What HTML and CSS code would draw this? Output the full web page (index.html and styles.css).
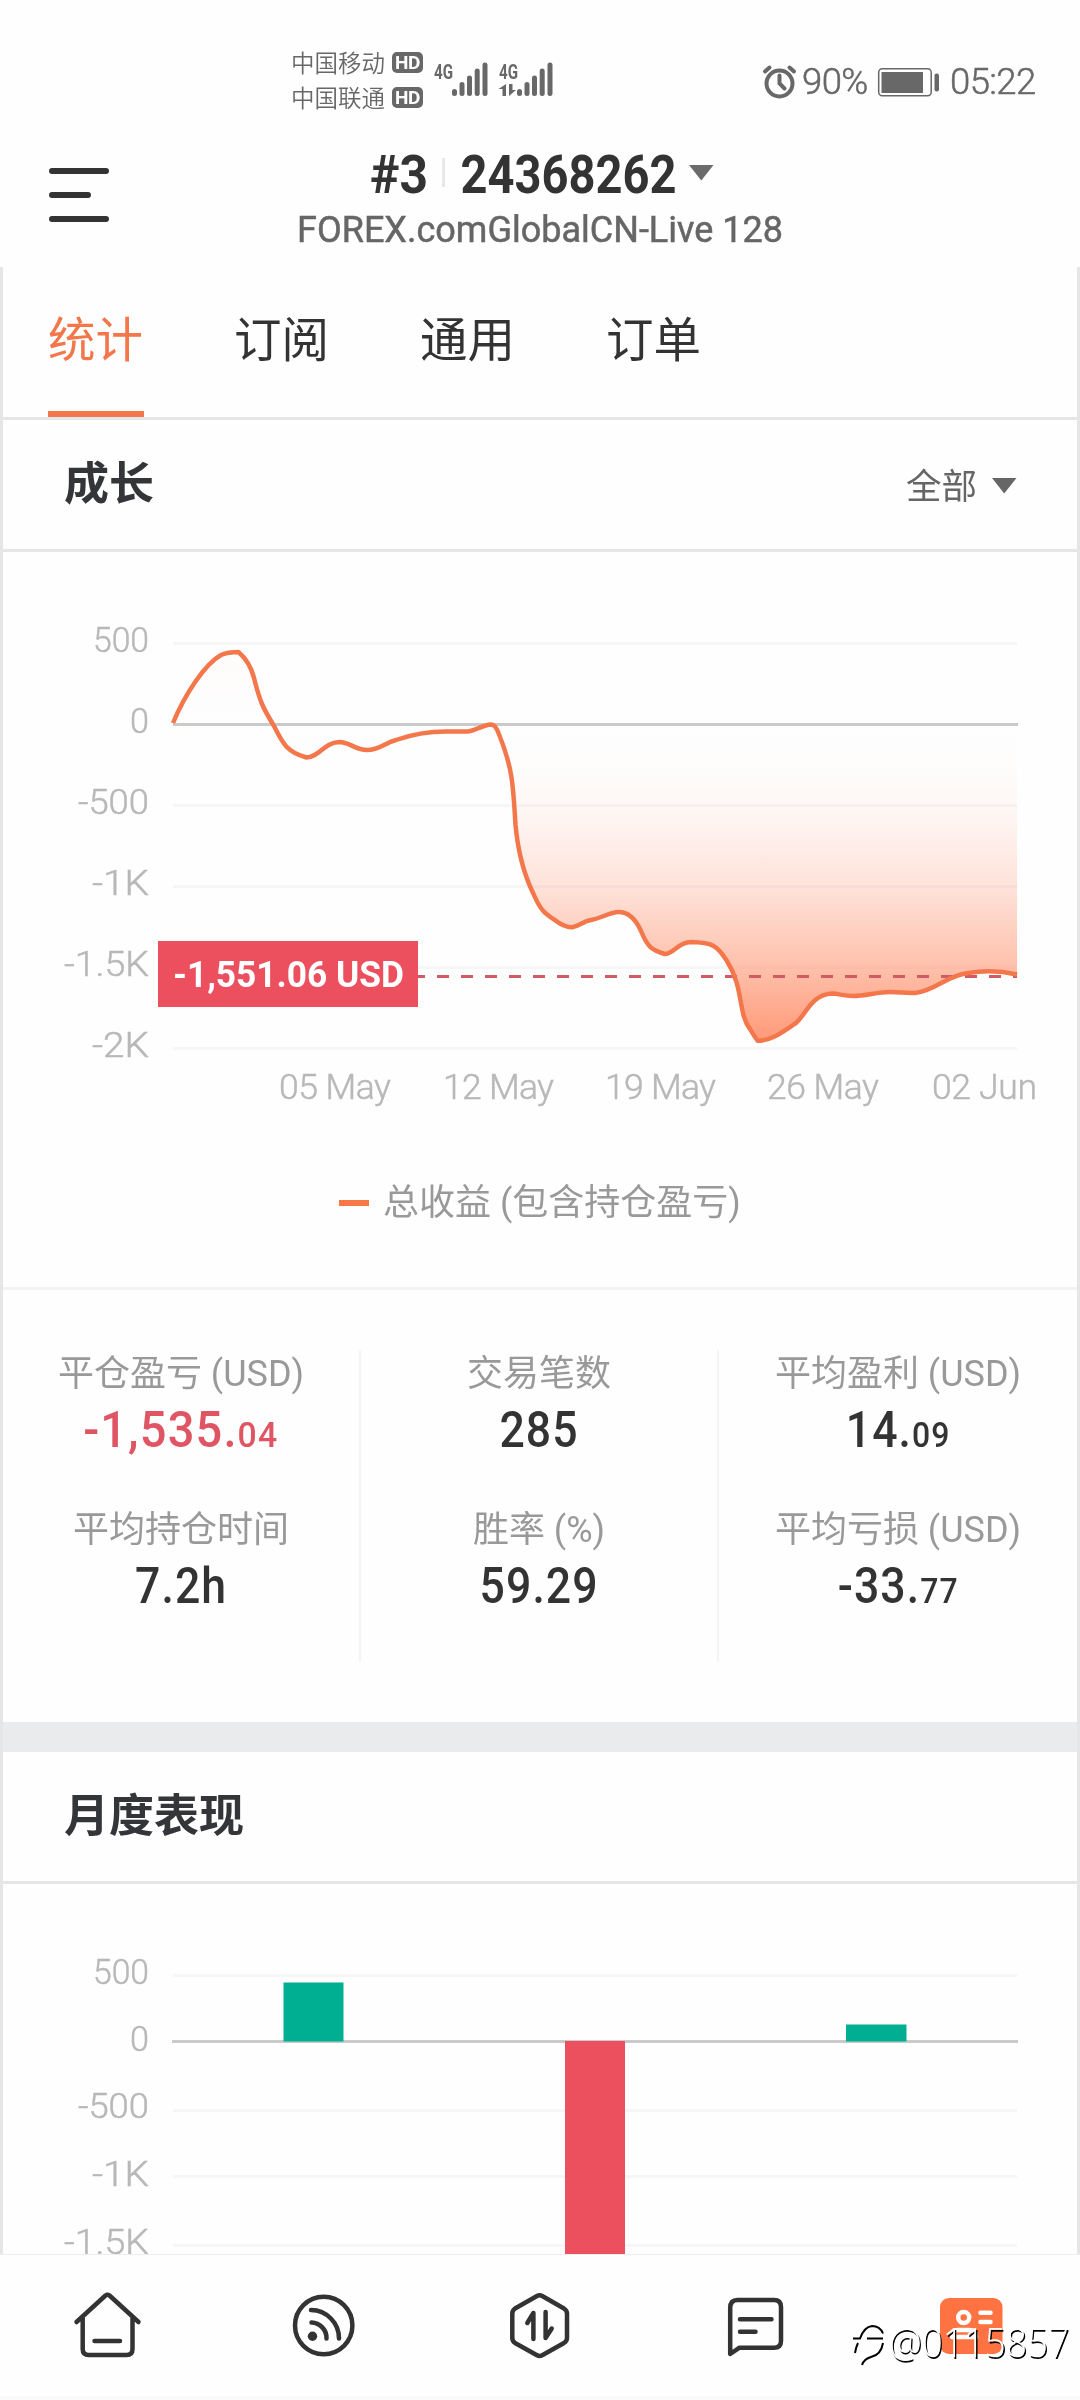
FILE: index.html
```html
<!DOCTYPE html>
<html lang="zh-CN">
<head>
<meta charset="utf-8">
<title>统计</title>
<link rel="stylesheet" href="styles.css">
</head>
<body>
<div class="screen">
  <div class="statusbar">
    <div class="carriers">
      <div class="carrier">中国移动<span class="hd">HD</span></div>
      <div class="carrier">中国联通<span class="hd">HD</span></div>
    </div>
    <svg class="signals" width="124" height="40" viewBox="432 60 124 40">
      <g class="net"><text x="434" y="79" textLength="19" lengthAdjust="spacingAndGlyphs">4G</text><text x="499" y="79" textLength="19" lengthAdjust="spacingAndGlyphs">4G</text></g>
      <g class="sig-bars">
        <path d="M454.5 91.5V93.5M462 84.500V93.500M469.500 78V93.500M477.200 71V93.500M485 65V93.500"/>
        <path d="M519.500 91.500V93.500M527 84.500V93.500M534.500 78V93.500M542.200 71V93.500M550 65V93.500"/>
      </g>
      <path class="solid" d="M506 84v12h-3.500v-7h-4zM509 96v-12h3.500v6h3.500z"/>
    </svg>
    <div class="power">
      <svg width="36" height="36" viewBox="762 62 36 36" class="alarm"><circle cx="779.500" cy="81.500" r="13"/><path d="M779.500 73.500v8l5 5M765 69.500l4.500-4M794 69.500l-4.500-4"/></svg>
      <span class="status-num">90%</span>
      <svg width="63" height="30" viewBox="877 65 63 30"><rect x="878.700" y="66.700" width="52.500" height="27" rx="3.500" fill="none" stroke="#686868" stroke-width="1.500"/><rect class="solid" x="881.500" y="70" width="41.500" height="21"/><rect class="solid" x="934.500" y="71.500" width="4.500" height="18" rx="2"/></svg>
      <span class="status-num clock">05:22</span>
    </div>
  </div>

  <header class="header">
    <svg class="menu" width="60" height="54" viewBox="0 0 60 54"><path d="M3 3H57M3 27H39M3 51H57"/></svg>
    <div class="account">
      <svg width="484" height="100" viewBox="299 146 484 100">
        <g class="acc-title"><text x="370" y="192.500" textLength="58" lengthAdjust="spacingAndGlyphs">#3</text><text x="460.500" y="192.500" textLength="216" lengthAdjust="spacingAndGlyphs">24368262</text></g>
        <rect x="442" y="158" width="3" height="29" fill="#e8e8e8"/>
        <path d="M689 165h24.500l-12.200 15.500z" fill="#6b6b6b"/>
        <text class="acc-server" x="297" y="241.500" textLength="486" lengthAdjust="spacingAndGlyphs">FOREX.comGlobalCN-Live 128</text>
      </svg>
    </div>
  </header>

  <main class="frame">
    <nav class="tabs">
      <div class="tab active">统计</div><div class="tab">订阅</div><div class="tab">通用</div><div class="tab">订单</div>
    </nav>
    <section class="section-head">
      <h2>成长</h2>
      <div class="filter">全部<svg width="25" height="16" viewBox="0 0 25 16"><path d="M0 0h24.500L12.200 15.500z" fill="#666"/></svg></div>
    </section>

    <svg class="growth" width="1074" height="598" viewBox="3 552 1074 598">
      <defs>
        <linearGradient id="loss" gradientUnits="userSpaceOnUse" x1="0" y1="652" x2="0" y2="1041">
          <stop offset="0" stop-color="#ff8e68" stop-opacity=".02"/>
          <stop offset=".2" stop-color="#ff8e68" stop-opacity="0"/>
          <stop offset=".3" stop-color="#ff8e68" stop-opacity=".015"/>
          <stop offset=".4" stop-color="#ff8e68" stop-opacity=".06"/>
          <stop offset=".6" stop-color="#ff8e68" stop-opacity=".24"/>
          <stop offset=".81" stop-color="#ff8e68" stop-opacity=".55"/>
          <stop offset="1" stop-color="#ff8e68" stop-opacity=".9"/>
        </linearGradient>
      </defs>
      <path class="grid" d="M173 643.500H1017M173 805.500H1017M173 886.500H1017M173 967.500H1017M173 1048.500H1017"/>
      <path class="zero" d="M173 724.500H1018"/>
      <path fill="url(#loss)" d="M173 723C185 694 205 664 221 655Q228 652 238.500 652Q250 662 254 678C260 702 263 708 274 726C283 744 287 752 306.500 757.500C320 757 323 743 339 742C350 742 355 750 367 750C380 750 384 743 396 740C413 734 430 731.500 446 731.500H468C477 730 483 725 491 724.500C495 724.500 497 729 498.500 733C513 769 513 785 515.500 825C519 863 529 885 534 895C542 914 548 915 559 923Q568 928 573 927C579 926 584 921 591 920C602 918 610 912 618.500 912C631 912 637 922 641 931C648 948 652 950 664.700 954C674 954 678 942 691 942C712 942.500 717 945 727 961C744 988 738 1014 750 1029Q754 1036 757.600 1040.700C772 1041 785 1030 796 1023C807 1013 811 995 832 993.500C839 993.500 843 996 853 996C866 996 877 992 890 992C900 992 906 993.500 915 993C937 990 945 976 968 973Q993 969 1017 974.500V724.500H173Z"/>
      <path class="target" d="M413 976.500H1017"/>
      <path class="curve" d="M173 723C185 694 205 664 221 655Q228 652 238.500 652Q250 662 254 678C260 702 263 708 274 726C283 744 287 752 306.500 757.500C320 757 323 743 339 742C350 742 355 750 367 750C380 750 384 743 396 740C413 734 430 731.500 446 731.500H468C477 730 483 725 491 724.500C495 724.500 497 729 498.500 733C513 769 513 785 515.500 825C519 863 529 885 534 895C542 914 548 915 559 923Q568 928 573 927C579 926 584 921 591 920C602 918 610 912 618.500 912C631 912 637 922 641 931C648 948 652 950 664.700 954C674 954 678 942 691 942C712 942.500 717 945 727 961C744 988 738 1014 750 1029Q754 1036 757.600 1040.700C772 1041 785 1030 796 1023C807 1013 811 995 832 993.500C839 993.500 843 996 853 996C866 996 877 992 890 992C900 992 906 993.500 915 993C937 990 945 976 968 973Q993 969 1017 974.500"/>
      <g class="axis">
        <text x="93" y="652" textLength="56" lengthAdjust="spacingAndGlyphs">500</text><text x="130" y="733" textLength="19" lengthAdjust="spacingAndGlyphs">0</text><text x="78" y="814" textLength="71" lengthAdjust="spacingAndGlyphs">-500</text><text x="92" y="895" textLength="57" lengthAdjust="spacingAndGlyphs">-1K</text><text x="64" y="976" textLength="85" lengthAdjust="spacingAndGlyphs">-1.5K</text><text x="92" y="1057" textLength="57" lengthAdjust="spacingAndGlyphs">-2K</text>
        <text x="279" y="1099" textLength="112">05 May</text><text x="443" y="1099" textLength="111">12 May</text><text x="605" y="1099" textLength="111">19 May</text><text x="767" y="1099" textLength="112">26 May</text><text x="932" y="1099" textLength="105">02 Jun</text>
      </g>
      <rect x="158" y="941" width="260" height="66" fill="#ec4f5e"/>
      <text class="flag" x="173" y="986.500" textLength="231" lengthAdjust="spacingAndGlyphs">-1,551.06 USD</text>
    </svg>
    <div class="legend"><i></i>总收益 (包含持仓盈亏)</div>

    <section class="stats">
      <div class="stat-col">
        <div class="label">平仓盈亏 (USD)</div><div class="value loss"><span>-1,535.<small>04</small></span></div>
        <div class="label">平均持仓时间</div><div class="value"><span>7.2h</span></div>
      </div>
      <div class="stat-col">
        <div class="label">交易笔数</div><div class="value"><span>285</span></div>
        <div class="label">胜率 (%)</div><div class="value"><span>59.29</span></div>
      </div>
      <div class="stat-col">
        <div class="label">平均盈利 (USD)</div><div class="value"><span>14.<small>09</small></span></div>
        <div class="label">平均亏损 (USD)</div><div class="value"><span>-33.<small>77</small></span></div>
      </div>
    </section>
    <div class="band"></div>
    <section class="section-head monthly"><h2>月度表现</h2></section>
    <svg class="months" width="1074" height="370" viewBox="3 1884 1074 370">
      <path class="grid" d="M173 1975.500H1017M173 2110.500H1017M173 2176.500H1017M173 2245.500H1017"/>
      <path class="zero" d="M172 2041.500H1018"/>
      <path fill="#00ae92" d="M283.500 1982.500h60v59h-60zM846 2024.500h60.500v17h-60.500z"/>
      <path fill="#ec4f5e" d="M565 2041h60v213h-60z"/>
      <g class="axis"><text x="93" y="1984" textLength="56" lengthAdjust="spacingAndGlyphs">500</text><text x="130" y="2050.500" textLength="19" lengthAdjust="spacingAndGlyphs">0</text><text x="78" y="2118" textLength="71" lengthAdjust="spacingAndGlyphs">-500</text><text x="92" y="2186" textLength="57" lengthAdjust="spacingAndGlyphs">-1K</text><text x="64" y="2253.500" textLength="85" lengthAdjust="spacingAndGlyphs">-1.5K</text></g>
    </svg>
  </main>

  <footer class="bottom-nav">
    <svg viewBox="68 2285 80 80"><path d="M76.500 2322L105.500 2295.500Q107.500 2294 109.500 2295.500L138.500 2322M82.700 2318V2349Q82.700 2355 88.700 2355H126.500Q132.500 2355 132.500 2349V2318M94.500 2341H120"/></svg>
    <svg viewBox="284 2285 80 80"><circle cx="323.700" cy="2325.500" r="28.700"/><path d="M311 2310A28.300 28.300 0 0 1 339 2338.500M311.500 2322.500A15.500 15.500 0 0 1 326.500 2338.500"/><circle class="fill" cx="312.500" cy="2336.300" r="4.700"/></svg>
    <svg viewBox="500 2285 80 80"><path d="M537 2296Q539.600 2294.500 542.200 2296L564 2308.500Q567 2310.500 567 2313.500V2338Q567 2341 564 2343L542.200 2355.300Q539.600 2356.800 537 2355.300L515 2343Q512.300 2341 512.300 2338V2313.500Q512.300 2310.500 515 2308.500ZM527.300 2323L533.400 2313V2339M545.600 2312V2338L551.700 2328.500"/></svg>
    <svg viewBox="716 2285 80 80"><path d="M730.200 2354V2308Q730.200 2300 737.500 2300H774Q781 2300 781 2307V2341Q781 2347.700 774 2347.700H739.500Z M740 2319.300H771.500M740 2331.700H755.500"/></svg>
    <svg viewBox="932 2285 80 80" class="profile"><rect x="940" y="2298" width="62.500" height="56" rx="9"/><g class="person"><circle cx="963.700" cy="2317.500" r="5.500"/><path d="M952 2337Q952 2330 958 2330H969Q976 2330 976 2337ZM980.500 2312.700H990.500M980.500 2322H990.500"/></g></svg>
  </footer>
  <div class="watermark">
    <svg width="34" height="44" viewBox="0 0 34 44"><path class="glint" d="M0 14H7Q11 2 19 1Q26 1 30 8M14 14H30M30 19Q28 30 18 32Q12 34 9 40M5 19Q3 23 2 29"/><path d="M1 15.500H8Q12 4 20 3Q28 3 31 10.500M15 15.500H31M31 20Q29 32 19 34Q12 36 10 42M6 20Q4 24 3 30"/></svg><span>@0115857</span>
  </div>
</div>
</body>
</html>
```
FILE: styles.css
```css
* { box-sizing: border-box; }
body { margin: 0; background: #fefefe; color: #333; font-family: Roboto, "Noto Sans CJK SC", sans-serif; }
svg { display: block; flex: none; }
.screen { position: relative; width: 1080px; height: 2400px; overflow: hidden; display: flex; flex-direction: column; }

.statusbar { height: 146px; display: flex; align-items: flex-start; padding: 45px 41px 0 291px; color: #686868; }
.carrier { height: 35px; display: flex; align-items: center; font: 350 23.500px/35px "Noto Sans CJK SC", sans-serif; }
.hd { margin-left: 7px; width: 31px; height: 21px; border-radius: 5px; background: #686868; color: #fff; font: 700 19px/21px Roboto, sans-serif; text-align: center; letter-spacing: -.5px; }
.signals { margin: 15px 0 0 9px; }
.net { font: 700 21px Roboto, sans-serif; fill: #686868; }
.sig-bars { fill: none; stroke: #686868; stroke-width: 5; stroke-linecap: round; }
.solid { fill: #686868; }
.power { margin: 18px 0 0 auto; display: flex; align-items: center; }
.alarm { fill: none; stroke: #686868; stroke-width: 4; stroke-linecap: round; }
.status-num { font-size: 36.500px; line-height: 38px; width: 66px; margin: 0 9px 0 4px; font-weight: 300; -webkit-text-stroke: .5px #686868; letter-spacing: -.6px; }
.status-num.clock { width: 89px; margin: 0 0 0 10px; }

.header { height: 121px; display: flex; align-items: flex-start; }
.menu { margin: 22px 0 0 49px; fill: none; stroke: #333; stroke-width: 6; stroke-linecap: round; }
.account { margin-left: 190px; }
.account svg { overflow: visible; }
.acc-title { font-size: 53px; font-weight: 700; fill: #333; }
.acc-server { font-size: 36px; fill: #666; stroke: #666; stroke-width: .5; }

.frame { height: 1987px; overflow: hidden; border: solid #e6e6e6; border-width: 0 3px; }
.tabs { height: 153px; display: flex; gap: 92px; padding-left: 45px; border-bottom: 3px solid #e6e6e6; }
.tab { width: 94px; height: 150px; font-size: 47.500px; line-height: 140px; white-space: nowrap; font-family: "Noto Sans CJK SC", sans-serif; }
.tab.active { width: 96px; margin-right: -2px; color: #f3774a; border-bottom: 6px solid #f3774a; }
.section-head { height: 132px; display: flex; align-items: center; justify-content: space-between; padding: 0 60px 8px 61px; border-bottom: 3px solid #e6e6e6; font-family: "Noto Sans CJK SC", sans-serif; }
h2 { margin: 0; font-size: 45px; line-height: 60px; font-weight: 700; color: #333539; }
.filter { display: flex; align-items: center; gap: 15px; color: #666; font-size: 35.500px; padding-top: 5px; }
.filter svg { margin-top: 6px; }
.grid { stroke: #f7f7f7; stroke-width: 3; mix-blend-mode: multiply; }
.zero { stroke: #cacaca; stroke-width: 3; }
.target { stroke: #d05a66; stroke-width: 3; stroke-dasharray: 12 12; }
.curve { fill: none; stroke: #f3774a; stroke-width: 4.500; stroke-linejoin: round; }
.axis { font-size: 35.500px; font-weight: 300; fill: #b8b8b8; stroke: #b8b8b8; stroke-width: .5; }
.flag { font-size: 36px; font-weight: 700; fill: #fff; }
.legend { height: 140px; display: flex; justify-content: center; align-items: flex-start; padding-top: 27px; gap: 14px; font: 36px/52px Roboto, "Noto Sans CJK SC", sans-serif; color: #999; border-bottom: 3px solid #f3f3f3; }
.legend i { width: 30px; height: 6px; margin-top: 23px; background: #f97647; }

.stats { height: 432px; display: grid; grid-template-columns: repeat(3, 1fr); padding-top: 60px; }
.stat-col { height: 312px; text-align: center; border-right: 2px solid #f5f5f5; }
.stat-col:last-child { border-right: 0; }
.label { height: 48px; font-size: 36px; line-height: 48px; color: #999; white-space: nowrap; }
.value { height: 108px; font-size: 49.500px; line-height: 65px; font-weight: 500; color: #333; }
.value span { display: inline-block; letter-spacing: 1.200px; transform: scaleX(.9); }
.value small { font-size: 35.500px; }
.value.loss { color: #df5563; }
.value.loss span { transform: scaleX(.95); }
.band { height: 30px; background: #e9ebed; }

.bottom-nav { height: 146px; display: flex; justify-content: space-around; padding-top: 30px; border-top: 1px solid #ededed; border-bottom: 4px solid #fafafa; background: #fefefe; }
.bottom-nav svg { width: 80px; height: 80px; fill: none; stroke: #333; stroke-width: 4.500; stroke-linecap: round; stroke-linejoin: round; }
.bottom-nav .fill { fill: #333; stroke: none; }
.bottom-nav .profile rect { fill: #ff7342; stroke: none; }
.person { stroke: #fff; }
.watermark { position: absolute; left: 852px; top: 2323px; display: flex; font: 300 41px/36px "Open Sans", sans-serif; color: #fff; }
.watermark svg { fill: none; stroke: #000; stroke-width: 2; margin-right: 3px; }
.watermark .glint { stroke: #fff; }
.watermark span { text-shadow: 1.500px 1.500px 0 #000; transform: scaleX(.9); transform-origin: left; }
```
